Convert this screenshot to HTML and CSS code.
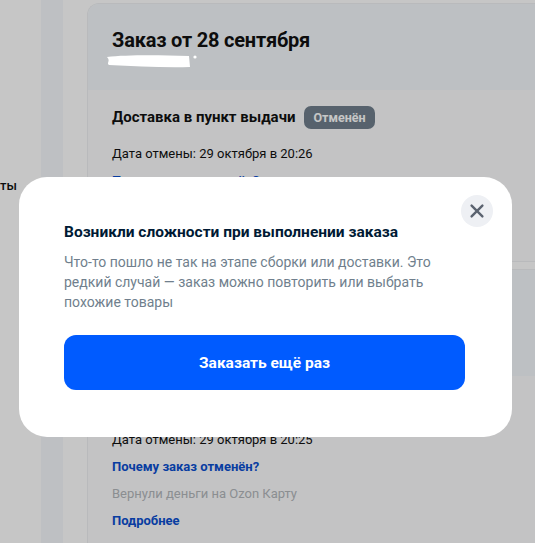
FILE: index.html
```html
<!DOCTYPE html>
<html lang="ru">
<head>
  <meta charset="UTF-8">
  <meta name="viewport" content="width=device-width, initial-scale=1.0">
  <title>Мои заказы</title>
  <link rel="stylesheet" href="styles.css">
</head>
<body>
  <div id="page">
    <aside class="sidebar">
      <p class="side-item">ты</p>
    </aside>
    <div class="side-strip"></div>

    <main class="orders">
      <section class="order">
        <div class="order-head">
          <h2>Заказ от 28 сентября</h2>
        </div>
        <div class="order-body">
          <div class="delivery">
            <span class="delivery-title">Доставка в пункт выдачи</span>
            <span class="badge">Отменён</span>
          </div>
          <p class="row date">Дата отмены: 29 октября в 20:26</p>
          <a href="#" class="row link">Почему заказ отменён?</a>
          <p class="row muted">Вернули деньги на Ozon Карту</p>
          <a href="#" class="row link">Подробнее</a>
        </div>
      </section>

      <section class="order">
        <div class="order-head tall">
          <h2>Заказ от 27 сентября</h2>
        </div>
        <div class="order-body">
          <div class="delivery">
            <span class="delivery-title">Доставка в пункт выдачи</span>
            <span class="badge">Отменён</span>
          </div>
          <p class="row date">Дата отмены: 29 октября в 20:25</p>
          <a href="#" class="row link">Почему заказ отменён?</a>
          <p class="row muted">Вернули деньги на Ozon Карту</p>
          <a href="#" class="row link">Подробнее</a>
        </div>
      </section>
    </main>
  </div>

  <div class="backdrop"></div>

  <!-- redaction mark over the order number -->
  <svg class="scribble" width="96" height="16" viewBox="0 0 96 16">
    <path d="M2 4 C20 2 50 2 84 3 L85 14 C60 15 30 13 4 12 C1 10 6 8 2 4 Z" fill="#fff"/>
    <circle cx="90" cy="4" r="1.6" fill="#fff"/>
  </svg>

  <div class="modal-layer">
    <div class="modal">
      <button class="close-btn" aria-label="Закрыть">
        <svg width="24" height="24" viewBox="0 0 24 24">
          <path d="M6.6 6.6 L17.4 17.4 M17.4 6.6 L6.6 17.4" stroke="#5b6370" stroke-width="2.4" stroke-linecap="round" fill="none"/>
        </svg>
      </button>
      <h3 class="modal-title">Возникли сложности при выполнении заказа</h3>
      <p class="modal-text">Что-то пошло не так на этапе сборки или доставки. Это редкий случай — заказ можно повторить или выбрать похожие товары</p>
      <button class="primary-btn">Заказать ещё раз</button>
    </div>
  </div>
</body>
</html>
```

FILE: styles.css
```css
/* General Styling */
body {
  font-family: Roboto, "Noto Sans", sans-serif;
  background: #fff;
  color: #111;
  margin: 0;
  padding: 0;
  overflow: hidden;
}

#page {
  display: flex;
  min-height: 100vh;
}

.sidebar {
  width: 41px;
  flex: none;
  overflow: hidden;
}

.side-item {
  margin: 177px 0 0;
  font-size: 13px;
  font-weight: 500;
  line-height: 18px;
}

.side-strip {
  width: 22px;
  flex: none;
  background: #f5f8fc;
}

/* Orders */
.orders {
  flex: none;
  width: 470px;
  margin-left: 24px;
  padding-top: 3px;
}

.order {
  border: 1px solid #eef0f3;
  border-right: none;
  border-radius: 12px 0 0 0;
  background: #fbfcfd;
  margin-bottom: 7px;
  overflow: hidden;
}

.order-head {
  height: 86px;
  background: #f4f8fb;
  padding: 0 24px;
  box-sizing: border-box;
}

.order-head.tall {
  height: 106px;
}

.order-head h2 {
  margin: 0;
  padding-top: 22px;
  font-size: 20px;
  font-weight: 700;
  letter-spacing: -0.2px;
  line-height: 28px;
}

.order-body {
  padding: 15px 24px 16px;
}

.delivery {
  display: flex;
  align-items: center;
  gap: 9px;
  height: 24px;
}

.delivery-title {
  font-size: 15px;
  font-weight: 700;
}

.badge {
  background: #707f8d;
  color: #fff;
  font-size: 12.5px;
  font-weight: 700;
  line-height: 23px;
  padding: 0 9px;
  border-radius: 7px;
}

.row {
  display: block;
  margin: 7px 0 0;
  font-size: 13px;
  line-height: 20px;
  text-decoration: none;
}

.row.date {
  margin-top: 15px;
}

.link {
  color: #0b4fd0;
  font-weight: 700;
}

.muted {
  color: #b3b7bb;
}

/* Modal */
.backdrop {
  position: fixed;
  inset: 0;
  background: rgba(0, 0, 0, 0.224);
}

.scribble {
  position: absolute;
  left: 105px;
  top: 53px;
}

.modal-layer {
  position: fixed;
  inset: 0;
  padding: 177px 0 0 19px;
}

.modal {
  position: relative;
  width: 493px;
  box-sizing: border-box;
  background: #fff;
  border-radius: 28px;
  padding: 45px 47px 47px 45px;
}

.close-btn {
  position: absolute;
  top: 18px;
  right: 19px;
  width: 32px;
  height: 32px;
  border: none;
  border-radius: 50%;
  background: #eef0f4;
  padding: 4px;
  cursor: pointer;
}

.close-btn svg {
  display: block;
}

.modal-title {
  margin: 0;
  font-size: 15.5px;
  font-weight: 700;
  line-height: 20px;
  color: #001a34;
}

.modal-text {
  margin: 10px 0 0;
  font-size: 14px;
  line-height: 20px;
  color: #707f8d;
}

.primary-btn {
  display: block;
  width: 100%;
  height: 55px;
  margin-top: 23px;
  border: none;
  border-radius: 12px;
  background: #005bff;
  color: #fff;
  font-family: inherit;
  font-size: 15.5px;
  font-weight: 700;
  cursor: pointer;
}

.primary-btn:hover {
  background: #0050e0;
}
```
